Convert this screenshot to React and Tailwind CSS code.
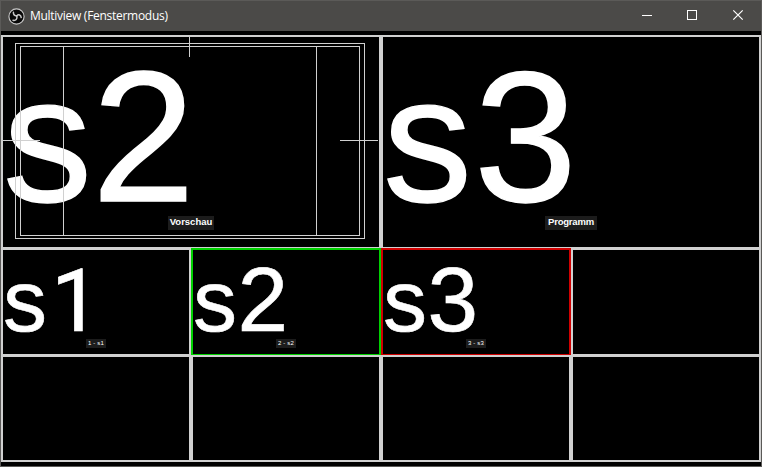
import React from "react";

function ObsLogo() {
  return (
    <svg className="h-[17px] w-[17px]" viewBox="0 0 17 17" fill="none">
      <circle cx="8.5" cy="8.5" r="7.6" fill="#080808" stroke="#c9c9c9" strokeWidth="1.1" />
      <g stroke="#c8c8c8" strokeWidth="1.5" strokeLinecap="round">
        <path d="M5.4 4.2C5.3 6.4 6.6 7.7 8.7 8" />
        <path d="M13.2 9.6C13 7 10.6 5.8 8.7 8" />
        <path d="M5 12.2C7.6 13 9.8 11 8.7 8" />
      </g>
    </svg>
  );
}

function TitleBar() {
  return (
    <header className="flex h-[30px] shrink-0 items-center bg-[#4b4a48] pl-[7px]">
      <ObsLogo />
      <h1 className="ml-[5px] flex-1 whitespace-nowrap font-['Open_Sans',sans-serif] text-[12px] tracking-[-0.28px] text-white">
        Multiview (Fenstermodus)
      </h1>
      <svg className="h-[30px] w-[138px]" viewBox="0 0 138 30" fill="none" stroke="#fff">
        <path d="M19 14.5h10" shapeRendering="crispEdges" />
        <rect x="64.5" y="9.5" width="9" height="9" shapeRendering="crispEdges" />
        <path d="M110.3 9.3l9.4 9.4M119.7 9.3l-9.4 9.4" strokeWidth="1.2" />
      </svg>
    </header>
  );
}

function SafeAreas() {
  return (
    <svg
      className="absolute inset-0 h-[210px] w-[376px]"
      viewBox="0 0 376 210"
      fill="none"
      stroke="#d0d0d0"
      shapeRendering="crispEdges"
    >
      <rect x="12.5" y="6.5" width="349" height="195" />
      <rect x="17.5" y="9.5" width="339" height="189" />
      <path d="M60.5 9v190M313.5 9v190M186.5 0v20M0 103.5h37M337 103.5h38" />
    </svg>
  );
}

function Preview({ digit, digitClass, label, labelClass, children }) {
  return (
    <section className="relative h-[210px] bg-black">
      <div className="w-fit whitespace-nowrap text-[178px] leading-[205px] [-webkit-text-stroke:1.4px_white]">
        s<span className={`text-[185px] leading-none ${digitClass}`}>{digit}</span>
      </div>
      {children}
      <div
        className={`absolute top-[179px] flex h-[14px] items-center justify-center bg-[#1c1c1c] pb-[2px] text-[9.5px] font-bold leading-none ${labelClass}`}
      >
        {label}
      </div>
    </section>
  );
}

function Scene({ digit, digitClass = "ml-[0.5px] text-[91px]", label, outline }) {
  return (
    <section className="relative bg-black">
      {digit && (
        <div className="w-fit whitespace-nowrap text-[88px] leading-[101px] [-webkit-text-stroke:0.6px_white]">
          s<span className={`leading-none ${digitClass}`}>{digit}</span>
        </div>
      )}
      {label && (
        <div className="absolute left-[83px] top-[89px] flex h-[9px] w-[20px] items-center justify-center whitespace-nowrap bg-[#1c1c1c] pb-px text-[6px] leading-none tracking-[0.2px]">
          {label}
        </div>
      )}
      {outline && (
        <div className={`absolute -bottom-px -left-[2px] -right-[2px] -top-[2px] border-2 border-b ${outline}`} />
      )}
    </section>
  );
}

export default function App() {
  return (
    <div className="flex h-[467px] w-[762px] flex-col border border-[#5b5a58] bg-black font-['Liberation_Sans',Arial,sans-serif] text-white">
      <TitleBar />
      <main className="mt-[4px] flex h-[427px] flex-col bg-[#d0d0d0] p-[2px]">
        <div className="grid grid-cols-2 gap-x-1">
          <Preview digit="2" digitClass="ml-0" label="Vorschau" labelClass="left-[165px] w-[46px]">
            <SafeAreas />
          </Preview>
          <Preview
            digit="3"
            digitClass="ml-[2px]"
            label="Programm"
            labelClass="left-[162px] w-[52px] tracking-[-0.2px]"
          />
        </div>
        <div className="mt-[3px] grid grid-cols-4 grid-rows-[104px_103px] gap-x-1 gap-y-[3px]">
          <Scene digit="1" digitClass="ml-[4px] font-[Roboto,sans-serif] text-[88px]" label="1 - s1" />
          <Scene digit="2" label="2 - s2" outline="border-[#00d000]" />
          <Scene digit="3" label="3 - s3" outline="border-[#d00000]" />
          <Scene />
          <Scene />
          <Scene />
          <Scene />
          <Scene />
        </div>
      </main>
    </div>
  );
}
